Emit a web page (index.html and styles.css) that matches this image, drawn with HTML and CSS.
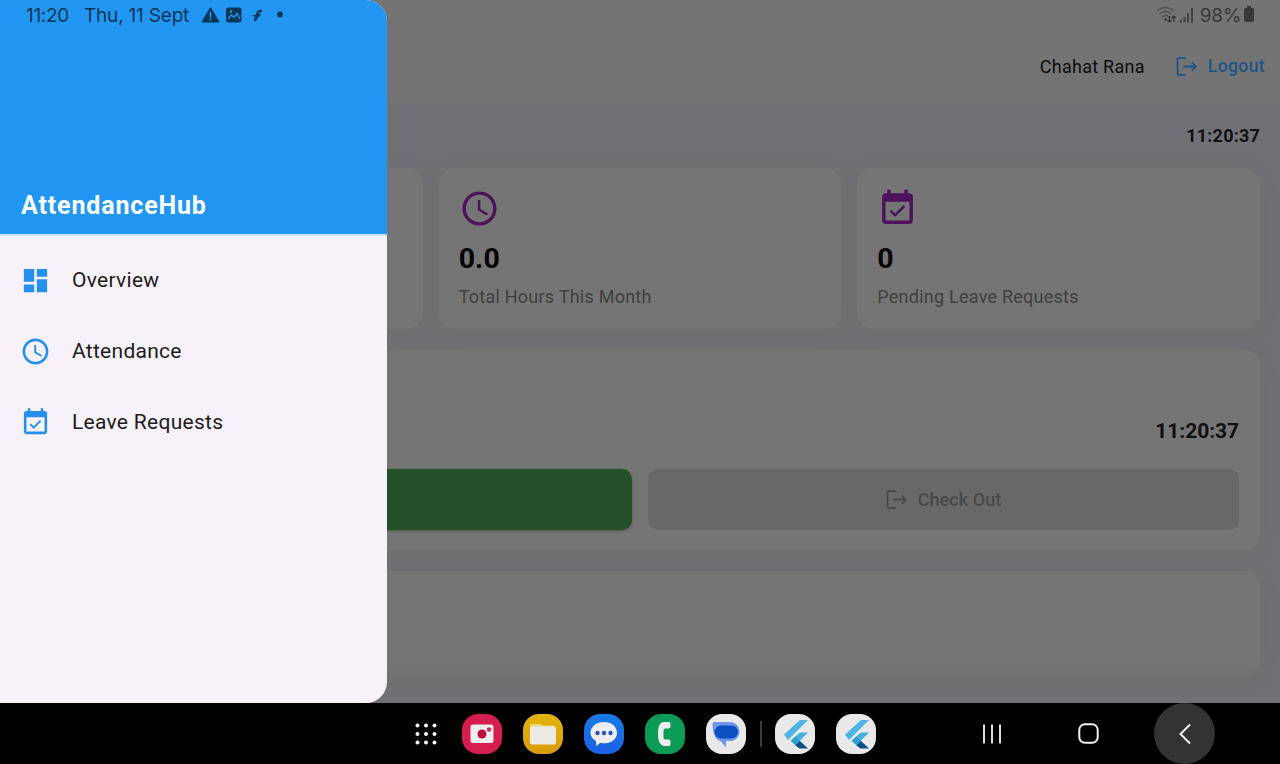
FILE: index.html
```html
<!DOCTYPE html>
<html lang="en">
<head>
<meta charset="utf-8">
<title>AttendanceHub</title>
<link rel="stylesheet" href="styles.css">
</head>
<body>
<svg class="defs" width="0" height="0">
  <symbol id="clock" viewBox="0 0 24 24"><path d="M11.99 2C6.47 2 2 6.48 2 12s4.47 10 9.99 10C17.52 22 22 17.52 22 12S17.52 2 11.99 2zM12 20c-4.42 0-8-3.58-8-8s3.58-8 8-8 8 3.580 8 8-3.580 8-8 8zm.5-13H11v6l5.250 3.150.75-1.230-4.500-2.670z"/></symbol>
  <symbol id="event" viewBox="0 0 24 24"><path d="M16.530 11.060 15.470 10l-4.880 4.880-2.120-2.120-1.060 1.060L10.590 17l5.940-5.940zM19 3h-1V1h-2v2H8V1H6v2H5c-1.110 0-1.990.9-1.990 2L3 19c0 1.100.89 2 2 2h14c1.100 0 2-.9 2-2V5c0-1.100-.9-2-2-2zm0 16H5V8h14v11z"/></symbol>
  <symbol id="dash" viewBox="0 0 24 24"><path d="M3 13h8V3H3v10zm0 8h8v-6H3v6zm10 0h8V11h-8v10zm0-18v6h8V3h-8z"/></symbol>
  <symbol id="exit" viewBox="0 0 20 18"><path d="M9.500 1H2.500Q1.500 1 1.500 2v14q0 1 1 1h7M7 9H19M15 5l4 4-4 4" fill="none" stroke="currentColor" stroke-width="1.700"/></symbol>
  <symbol id="flutter" viewBox="0 0 40 40"><path d="M25 6h8L13 26l-4-5.500z" fill="#50b5e2"/><path d="M25 18.500h8l-12 12-5.500-4z" fill="#46aedb"/><path d="M16 27l4.500-4.500 5 5-4.500 4.500z" fill="#2e9fd3"/><path d="M20.500 31.500l4.500-4.500 8 7.500h-8.500z" fill="#0b4f88"/></symbol>
</svg>
<div class="screen">
  <main class="page">
    <header class="topbar">
      <span class="user">Chahat Rana</span>
      <a class="logout"><svg class="exit"><use href="#exit"/></svg><span>Logout</span></a>
    </header>
    <div class="content">
      <div class="time">11:20:37</div>
      <section class="stats">
        <article class="card stat"></article>
        <article class="card stat"><svg class="big"><use href="#clock"/></svg><strong>0.0</strong><span>Total Hours This Month</span></article>
        <article class="card stat"><svg class="big"><use href="#event"/></svg><strong>0</strong><span>Pending Leave Requests</span></article>
      </section>
      <section class="card check">
        <div class="check-time">11:20:37</div>
        <div class="buttons">
          <div class="btn in"></div>
          <div class="btn out"><svg class="exit"><use href="#exit"/></svg><span>Check Out</span></div>
        </div>
      </section>
      <section class="card recent"></section>
    </div>
  </main>
  <aside class="drawer">
    <div class="drawer-head"><h1>AttendanceHub</h1></div>
    <nav>
      <a class="item"><svg><use href="#dash"/></svg><span>Overview</span></a>
      <a class="item"><svg><use href="#clock"/></svg><span>Attendance</span></a>
      <a class="item"><svg><use href="#event"/></svg><span>Leave Requests</span></a>
    </nav>
  </aside>
  <div class="status">
    <div class="status-left">
      <span class="s-clock">11:20</span><span class="s-date">Thu, 11 Sept</span>
      <svg width="90" height="20" viewBox="0 0 90 20"><path d="M9.500 2.500 18 17H1z" stroke="currentColor" stroke-linejoin="round"/><path d="M9.500 7v5.500M9.500 13.500v1.800" stroke="#2196f3" stroke-width="1.700"/><rect x="25" y="2.500" width="15.500" height="15" rx="2.500"/><path d="M27 14l3.500-4 2.500 2.200 3-3.700 3 5.500" fill="none" stroke="#2196f3" stroke-width="1.300"/><circle cx="30" cy="6.500" r="1.300" fill="#2196f3"/><path d="M61 6.300c-3-.8-4.300.3-4.700 3.200-.3 3-.9 4.800-3.300 5.500" fill="none" stroke="currentColor" stroke-width="2.600"/><path d="M51 10.500l9-1.800-1.200 2.900-5.300.2z"/><circle cx="79" cy="9.500" r="2.900"/></svg>
    </div>
    <div class="status-right">
      <svg width="40" height="20" viewBox="0 0 40 20"><g fill="none" stroke="#505050" stroke-width="1.300"><path d="M1 6q8.500-7 17 0M3.500 9q6-5 12 0M6 12q3.500-3 7 0"/></g><circle cx="9.500" cy="14.500" r="1.300"/><path d="M13.500 11v6m-2-2 2 2 2-2M17.800 17v-6m-2 2 2-2 2 2" fill="none" stroke="#333" stroke-width="1.200"/><path d="M24 15h2v2.500h-2zM27.500 12h2v5.500h-2zM31 8h2v9.500h-2zM35 3h2v14.500h-2z" fill="#434343"/></svg>
      <span>98%</span>
      <svg width="12" height="18" viewBox="0 0 12 18"><path d="M4 0h4v2h1q2 0 2 2v10q0 2-2 2H3q-2 0-2-2V4q0-2 2-2h1z"/></svg>
    </div>
  </div>
</div>
<footer class="dock">
  <div class="apps">
    <svg class="grid" width="22" height="22" viewBox="0 0 22 22"><circle cx="2.500" cy="2.500" r="2"/><circle cx="11" cy="2.500" r="2"/><circle cx="19.500" cy="2.500" r="2"/><circle cx="2.500" cy="11" r="2"/><circle cx="11" cy="11" r="2"/><circle cx="19.500" cy="11" r="2"/><circle cx="2.500" cy="19.500" r="2"/><circle cx="11" cy="19.500" r="2"/><circle cx="19.500" cy="19.500" r="2"/></svg>
    <div class="app rec"><svg viewBox="0 0 40 40"><rect x="8.500" y="10.500" width="23" height="18.500" rx="2.500" fill="#eee"/><circle cx="20" cy="20" r="4.500" fill="#bd0d3f"/><circle cx="27" cy="15.500" r="2.200" fill="#ce2b57"/></svg></div>
    <div class="app files"><svg viewBox="0 0 40 40"><path d="M7 12q0-2 2-2h8l3 1.500h10q2 0 2 2v5H7z" fill="#f3d77d"/><rect x="7" y="12.500" width="26" height="18" rx="2" fill="#eceae4"/></svg></div>
    <div class="app chat"><svg viewBox="0 0 40 40"><path d="M20 8c7.500 0 13 4.600 13 10.800s-5.500 10.500-12 10.500c-2 0-3-.1-4.500-.5L12 32v-5c-3.200-2-5.500-4.500-5.500-8C6.500 12.600 12.500 8 20 8z" fill="#eceef2"/><g fill="#2653b4"><circle cx="13.500" cy="19" r="2.200"/><circle cx="20" cy="19" r="2.200"/><circle cx="26.500" cy="19" r="2.200"/></g></svg></div>
    <div class="app phone"><svg viewBox="0 0 40 40"><path d="M19 8h5q1.500 0 1.500 2v2.500q0 2-2 2h-3q-2 0-2 2v7q0 2 2 2h3q2 0 2 2V30q0 2-1.500 2h-4c-5 0-7-5-7-12s1.500-12 6-12z" fill="#ededed"/></svg></div>
    <div class="app msg"><svg viewBox="0 0 40 40"><path d="M8 8h16c5.500 0 9.500 4.500 9.500 9.500S29.500 27 25 27h-5v6.500l-5.500-6.500C9 25.500 7 20 6.500 10.500Q6.300 8 8 8z" fill="#6f96e8"/><rect x="8.500" y="11.500" width="23.500" height="13" rx="6.500" fill="#0b4fc0"/></svg></div>
    <i class="sep"></i>
    <div class="app"><svg><use href="#flutter"/></svg></div>
    <div class="app"><svg><use href="#flutter"/></svg></div>
  </div>
  <div class="keys">
    <div class="key"><svg width="20" height="20" viewBox="0 0 20 20"><path d="M1 .5v19M9 .5v19M17 .5v19" stroke="#ddd" stroke-width="2"/></svg></div>
    <div class="key"><svg width="21" height="21" viewBox="0 0 21 21"><rect x="1.300" y="1.300" width="18.400" height="18.400" rx="5.500" fill="none" stroke="#f2f2f2" stroke-width="2"/></svg></div>
    <div class="key back"><svg width="14" height="22" viewBox="0 0 14 22"><path d="M12 1.500 2.500 11l9.500 9.500" fill="none" stroke="#f2f2f2" stroke-width="2"/></svg></div>
  </div>
</footer>
</body>
</html>
```
FILE: styles.css
```css
* { box-sizing: border-box; }
body { margin: 0; width: 1280px; height: 764px; overflow: hidden; background: #000; font-family: Roboto, sans-serif; white-space: nowrap; }
svg { display: block; flex: none; fill: currentColor; }
.defs { position: absolute; }
.screen { position: relative; height: 703px; overflow: hidden; background: #707174; }
.page { display: flex; flex-direction: column; height: 703px; }
.topbar { height: 104px; padding: 28px 15px 0 0; display: flex; align-items: center; justify-content: flex-end; gap: 31px; background: linear-gradient(#747474 92%, #717274); color: #0c0c0c; font-size: 18px; letter-spacing: .27px; }
.logout { display: flex; align-items: center; gap: 11px; color: #1c5587; font-weight: 500; font-size: 17.5px; letter-spacing: .4px; }
.exit { width: 21px; height: 19px; }
.content { padding: 20px; display: flex; flex-direction: column; }
.time { height: 22px; line-height: 23px; margin-bottom: 22px; text-align: right; font-size: 18px; font-weight: 700; letter-spacing: .2px; color: #111216; }
.stats { display: grid; grid-template-columns: repeat(3, 1fr); gap: 16px; }
.card { background: #757575; border-radius: 16px; box-shadow: 0 3px 13px rgba(111, 111, 111, .8); }
.stat { height: 161px; padding: 20px; display: flex; flex-direction: column; }
.big { width: 41px; height: 41px; color: #4c125b; }
.stat strong { margin-top: 12px; line-height: 36px; font-size: 28.5px; letter-spacing: .1px; color: #040404; }
.stat span { margin-top: 8px; line-height: 24px; font-size: 18px; letter-spacing: .24px; color: #404040; }
.check { height: 200px; margin-top: 21px; padding: 68px 21px 0; }
.check-time { height: 26px; line-height: 26px; text-align: right; font-size: 21px; font-weight: 700; letter-spacing: -.05px; color: #101010; }
.buttons { display: grid; grid-template-columns: 1fr 1fr; gap: 16px; margin-top: 25px; }
.btn { height: 61px; border-radius: 10px; display: flex; align-items: center; justify-content: center; gap: 11px; font-size: 18px; font-weight: 500; letter-spacing: .05px; }
.in { background: #235026; box-shadow: 0 1px 3px #555; }
.out { background: #686868; color: #484848; }
.recent { height: 105px; margin-top: 21px; background: linear-gradient(#757575 80%, #727374); }
.drawer { position: absolute; left: 0; top: 0; width: 387px; height: 703px; background: #f7f2fa; border-radius: 0 21px 21px 0; overflow: hidden; }
.drawer-head { height: 236px; padding: 0 21px 13px; display: flex; align-items: flex-end; background: #2196f3; border-bottom: 2px solid #c9e0f8; }
h1 { margin: 0; color: #fff; font-size: 25px; line-height: 30px; font-weight: 700; letter-spacing: .85px; }
nav { padding-top: 9px; }
.item { height: 71px; padding-left: 20px; display: flex; align-items: center; gap: 21px; color: #1d1b20; font-size: 21px; letter-spacing: .28px; }
.item span { padding-bottom: 2px; }
.item svg { width: 31px; height: 31px; color: #2590ec; }
.status { position: absolute; left: 0; top: 0; width: 1280px; height: 30px; padding: 0 25px 0 26px; display: flex; justify-content: space-between; font-family: Inter, sans-serif; font-size: 19px; font-weight: 300; }
.status-left, .status-right { display: flex; align-items: center; }
.status-left { color: #0b3657; }
.s-clock { margin-right: 15px; }
.s-date { margin-right: 12px; letter-spacing: -.2px; }
.status-right { color: #383838; }
.status-right span { margin: 0 2px 0 4px; }
.status-left, .status-right span { font-weight: 400; letter-spacing: -.3px; }
.dock { height: 61px; display: flex; justify-content: space-between; padding: 0 65px 0 415px; background: #000; }
.apps { display: flex; align-items: center; gap: 21px; }
.grid { margin-right: 4px; color: #fff; }
.app { width: 40px; height: 40px; border-radius: 16px; background: #e9e9e9; }
.app svg { width: 40px; height: 40px; }
.rec { background: #d51d50; }
.files { background: linear-gradient(#e2b50d, #d99b0b); }
.chat { background: linear-gradient(#187be6, #1b61e3); }
.phone { background: #0c9b56; }
.sep { width: 2px; height: 26px; margin: 0 -7.500px; background: #3c3c3c; }
.keys { display: flex; align-items: center; gap: 35px; }
.key { width: 61px; height: 61px; display: flex; align-items: center; justify-content: center; }
.back { border-radius: 50%; background: #333; }
```
